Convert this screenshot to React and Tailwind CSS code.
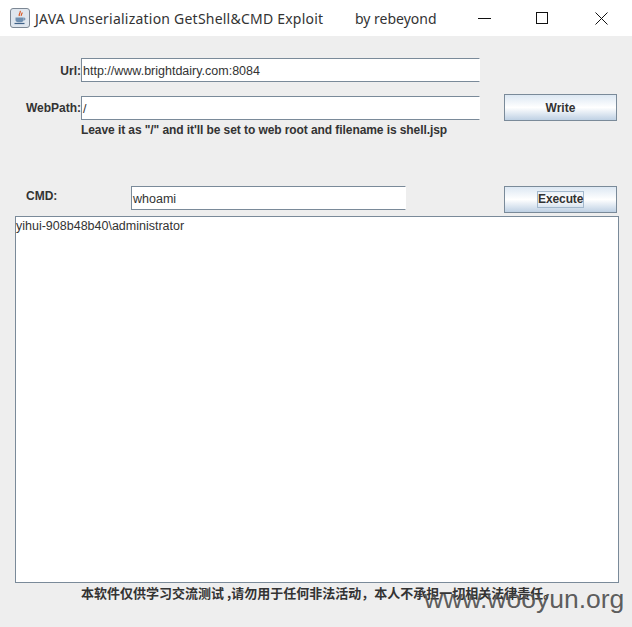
import React from "react";

const fieldClass =
  "h-[24px] bg-white border border-[#7a8a99] border-r-white pl-[1px] text-[12.5px] font-normal text-[#333333] leading-[24px] outline-none";

const JavaIcon = () => (
  <svg width="20" height="20" viewBox="0 0 20 20" className="shrink-0">
    <rect x="0.5" y="0.5" width="19" height="19" rx="2.5" fill="#dfe6ee" stroke="#7c8794" />
    <path d="M10 3c1.5 1.5-2 3-.6 5M12 4.5c.6 1.2-1.4 2-.6 3.4" fill="none" stroke="#d9531e" strokeWidth="1.2" />
    <path d="M5.5 9.5h8v2.5c0 1.4-1.2 2.2-2.4 2.2H8c-1.400 0-2.500-.8-2.500-2.200z" fill="#6f8fb0" />
    <path d="M13.500 10.200h1.300v1.600h-1.300" fill="none" stroke="#5a7da3" strokeWidth="0.9" />
    <path d="M4.500 15.500h10" stroke="#3f6288" strokeWidth="1.200" />
  </svg>
);

const App = () => {
  return (
    <div className="w-[632px] h-[627px] relative overflow-hidden bg-[#eeeeee] font-['Liberation_Sans',sans-serif]">
      {/* title bar */}
      <div className="h-[36px] bg-white flex items-center pl-[10px] text-[14px] text-[#333333] font-['Noto_Sans',sans-serif]">
        <JavaIcon />
        <span className="ml-[5px] w-[320px] whitespace-nowrap tracking-[0.22px]">
          JAVA Unserialization GetShell&amp;CMD Exploit
        </span>
        <span className="w-[100px] whitespace-nowrap">by rebeyond</span>
        <svg width="13" height="13" viewBox="0 0 13 13" className="ml-[23px] shrink-0">
          <path d="M0 6.500h13" stroke="#111111" />
        </svg>
        <svg width="13" height="13" viewBox="0 0 13 13" className="ml-[45px] shrink-0">
          <rect x="0.500" y="0.500" width="11" height="11" fill="none" stroke="#111111" />
        </svg>
        <svg width="13" height="13" viewBox="0 0 13 13" className="ml-[46px] shrink-0">
          <path d="M0.500 0.500l12 12M12.500 0.500l-12 12" stroke="#111111" />
        </svg>
      </div>

      {/* form */}
      <div className="pt-[22px] pl-[15px] text-[12px] font-bold text-[#333333]">
        <div className="flex items-center h-[23px]">
          <label className="w-[66px] text-right pt-[3px] leading-[16px]">Url:</label>
          <div className={`${fieldClass} w-[399px]`}>http://www.brightdairy.com:8084</div>
        </div>

        <div className="flex items-center h-[27px] mt-[13px]">
          <label className="w-[66px] text-right whitespace-nowrap pt-[1px] leading-[16px]">WebPath:</label>
          <div className={`${fieldClass} w-[399px]`}>/</div>
          <button className="ml-[24px] w-[113px] h-[27px] border border-[#7a8a99] bg-gradient-to-b from-[#dde8f3] via-white to-[#bfd1e4] text-[12px] font-bold text-[#333333]">
            Write
          </button>
        </div>

        <div className="ml-[66px] mt-[2px] h-[16px] leading-[14px] whitespace-nowrap tracking-[-0.08px]">
          Leave it as "/" and it'll be set to web root and filename is shell.jsp
        </div>

        <div className="flex items-start h-[27px] mt-[47px]">
          <label className="w-[116px] pl-[11px] leading-[20px]">CMD:</label>
          <div className={`${fieldClass} w-[275px]`}>whoami</div>
          <button className="ml-[98px] w-[113px] h-[27px] border border-[#7a8a99] bg-gradient-to-b from-[#dde8f3] via-white to-[#bfd1e4] flex items-center justify-center text-[12px] font-bold text-[#333333]">
            <span className="border border-[#a3b8cc] w-[47px] text-center h-[17px] leading-[15px] tracking-[-0.1px]">Execute</span>
          </button>
        </div>

        <div className="w-[604px] h-[367px] mt-[3px] bg-white border border-[#7a8a99] text-[12.5px] font-normal leading-[18px] text-[#333333]">
          yihui-908b48b40\administrator
        </div>
      </div>

      <div className="pl-[81px] h-[20px] text-[13px] font-bold leading-[20px] whitespace-nowrap text-[#333333] font-['Noto_Sans_CJK_SC',sans-serif]">
        本软件仅供学习交流测试 ,请勿用于任何非法活动，本人不承担一切相关法律责任。
      </div>

      {/* watermark */}
      <div className="absolute left-[424px] top-[581px] text-[26.5px] leading-[36px] whitespace-nowrap text-[#4a4a4a]/90">
        www.wooyun.org
      </div>
    </div>
  );
};

export default App;
